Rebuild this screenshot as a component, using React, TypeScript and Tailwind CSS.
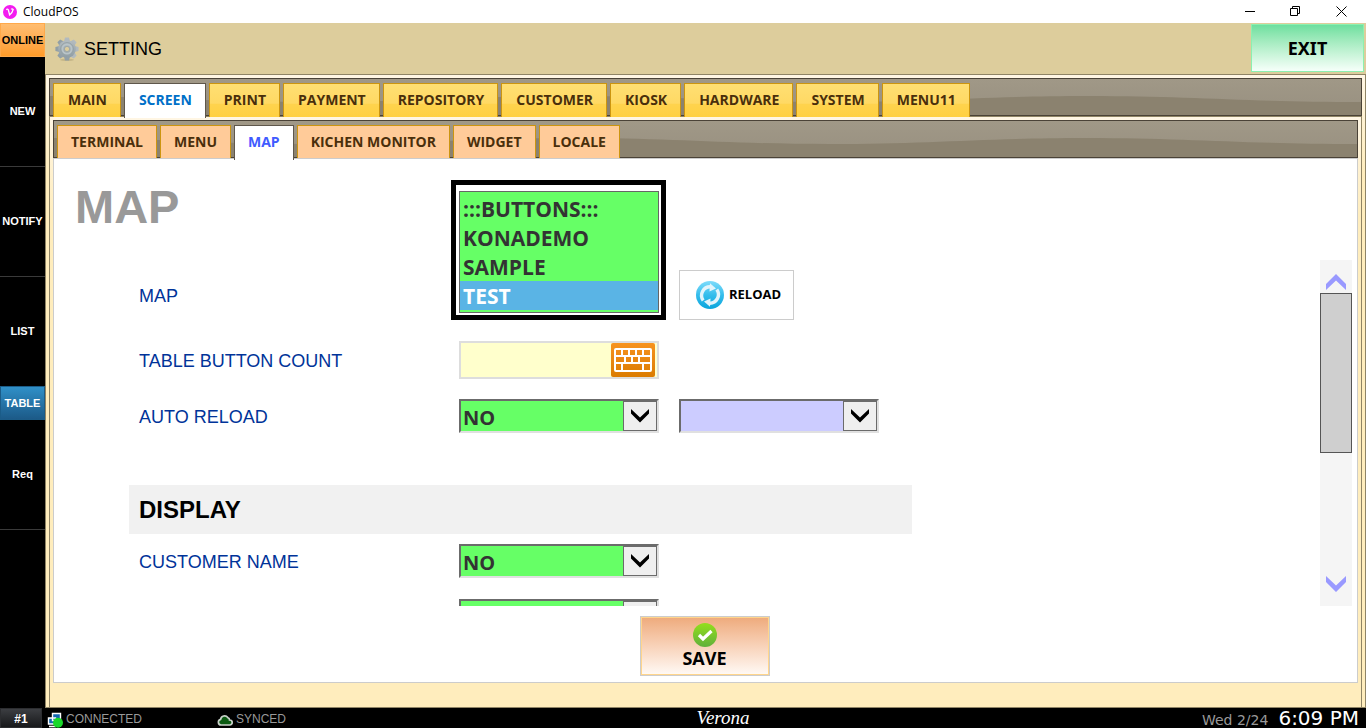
import { useState } from 'react'
import type { ReactNode } from 'react'

const mainTabs = ['MAIN', 'SCREEN', 'PRINT', 'PAYMENT', 'REPOSITORY', 'CUSTOMER', 'KIOSK', 'HARDWARE', 'SYSTEM', 'MENU11']
const screenTabs = ['TERMINAL', 'MENU', 'MAP', 'KICHEN MONITOR', 'WIDGET', 'LOCALE']
const maps = [':::BUTTONS:::', 'KONADEMO', 'SAMPLE', 'TEST']
const sideItems = ['NEW', 'NOTIFY', 'LIST']

const arial = "font-['Liberation_Sans',Arial,sans-serif]"
const segoe = "font-['Open_Sans','Segoe_UI',sans-serif]"
const tahoma = "font-['Noto_Sans',Tahoma,sans-serif]"

function GearIcon() {
  return (
    <svg viewBox="0 0 24 24" className="h-6 w-6" aria-hidden="true">
      <defs>
        <linearGradient id="gear" x1="0" y1="0" x2="0" y2="1">
          <stop offset="0" stopColor="#b4bcc0" />
          <stop offset="1" stopColor="#8f9da4" />
        </linearGradient>
      </defs>
      <ellipse cx="12" cy="22.8" rx="7" ry="1.2" fill="#b5a67c" opacity="0.6" />
      <g fill="url(#gear)">
        {[0, 45, 90, 135].map((a) => (
          <path key={a} d="M10 0.4h4l1 4v15.2l-1 4h-4l-1-4V4.4z" transform={`rotate(${a} 12 12)`} />
        ))}
        <circle cx="12" cy="12" r="8.8" />
      </g>
      <circle cx="12" cy="12" r="6.4" fill="none" stroke="#95a2a7" strokeWidth="1" />
      <circle cx="12" cy="12" r="4.6" fill="none" stroke="#b9c4c8" strokeWidth="1.8" />
      <circle cx="12" cy="12" r="2.6" fill="#ddcd9c" stroke="#95a2a7" strokeWidth="0.8" />
    </svg>
  )
}

function ReloadIcon() {
  return (
    <svg viewBox="0 0 28 30" className="h-[30px] w-7" aria-hidden="true">
      <defs>
        <linearGradient id="reload" x1="0" y1="0" x2="0" y2="1">
          <stop offset="0" stopColor="#7fdcfb" />
          <stop offset="0.5" stopColor="#35bdec" />
          <stop offset="1" stopColor="#0aa5dc" />
        </linearGradient>
      </defs>
      <circle cx="14" cy="15" r="14" fill="url(#reload)" />
      <g fill="none" stroke="#e3f4fb" strokeWidth="3.4">
        <path d="M7.2 20.4A8.6 8.6 0 0 1 14.5 6.8" />
        <path d="M20.8 9.6A8.6 8.6 0 0 1 13.5 23.2" />
      </g>
      <path d="M14 3.2l6 5.4-6.5 3z" fill="#e3f4fb" />
      <path d="M14 26.8l-6-5.4 6.5-3z" fill="#e3f4fb" />
    </svg>
  )
}

function KeyboardIcon() {
  return (
    <svg viewBox="0 0 38 24" className="h-6 w-[38px]" aria-hidden="true">
      <rect x="1" y="1" width="36" height="22" rx="1" fill="none" stroke="#fff" strokeWidth="2" />
      <path
        d="M1 8h36M1 15h36M8 1v7M15 1v7M22 1v7M29 1v7M11 8v7M18 8v7M25 8v7M8 15v8M29 15v8"
        stroke="#fff"
        strokeWidth="2"
      />
    </svg>
  )
}

function Chevron({ className, up = false }: { className: string; up?: boolean }) {
  return (
    <svg viewBox="0 0 20 16" className={className} aria-hidden="true">
      {up ? <path d="M0 10L10 0l10 10v6L10 6.5 0 16z" /> : <path d="M0 0v6l10 10 10-10V0L10 9.5z" />}
    </svg>
  )
}

function TabStrip({ children }: { children: ReactNode }) {
  return (
    <div className="relative h-[38px] border border-[#4a4237] bg-linear-to-b from-[#a09887] to-[#989080]">
      <svg viewBox="0 0 1304 36" preserveAspectRatio="none" className="absolute inset-0 h-full w-full" aria-hidden="true">
        <path
          d="M0 17C100 17 160 23 262 23S420 17 519 17 676 23 776 23 933 17 1033 17 1190 23 1304 23V36H0z"
          fill="#8b826f"
        />
      </svg>
      <div role="tablist" className="relative flex h-[38px] gap-[3px] pt-1 pl-[3px]">
        {children}
      </div>
    </div>
  )
}

function Tab({ label, active, tone, onClick }: { label: string; active: boolean; tone: 'gold' | 'peach'; onClick: () => void }) {
  const idle =
    tone === 'gold'
      ? 'pl-3.5 bg-[linear-gradient(#ffdf73,#ffd964_58%,#ffd34d_62%,#ffd040)]'
      : 'pl-[13px] bg-[#ffcb99]'
  const on = tone === 'gold' ? 'pl-3.5 text-[#0070c8]' : 'pl-[13px] text-[#3f5bff]'
  return (
    <button
      role="tab"
      aria-selected={active}
      onClick={onClick}
      className={`border border-b-0 pr-[13px] text-[14px] font-bold whitespace-nowrap ${segoe} ${
        active ? `relative z-10 -mb-px border-[#5f574b] bg-white pb-1 ${on}` : `border-[#cc9510] pb-0.5 text-[#4a2f0b] ${idle}`
      }`}
    >
      {label}
    </button>
  )
}

function SelectBox({ id, label, value, blue = false }: { id: string; label?: string; value: string; blue?: boolean }) {
  return (
    <div className="relative h-[34px] w-[200px] border-2 border-t-[#6b6b6b] border-r-[#e0e0e0] border-b-[#e0e0e0] border-l-[#6b6b6b]">
      <select
        id={id}
        aria-label={label}
        className={`block h-full w-full appearance-none pt-0.5 pl-0.5 text-[20px] leading-[30px] font-bold text-[#333] ${segoe} ${blue ? 'bg-[#ccccff]' : 'bg-[#66ff66]'}`}
        defaultValue={value}
      >
        <option>{value}</option>
        {!blue && <option>YES</option>}
      </select>
      <span className="pointer-events-none absolute inset-y-0 right-0 flex w-[34px] items-center justify-center border border-[#6b6b6b] bg-[#efefef]">
        <svg viewBox="0 0 20 14" className="h-3.5 w-5" aria-hidden="true">
          <path d="M1 0v4.5l9 9 9-9V0l-9 8.5z" />
        </svg>
      </span>
    </div>
  )
}

function Label({ htmlFor, children }: { htmlFor: string; children: ReactNode }) {
  return (
    <label htmlFor={htmlFor} className="w-80 shrink-0 pt-0.5 pl-2.5 text-[18px] text-[#003399]">
      {children}
    </label>
  )
}

function Sidebar() {
  const item = 'flex h-[110px] w-full items-center justify-center border-b border-[#3a3a3a] text-white'
  return (
    <nav className="w-[45px] shrink-0 bg-black text-[11px] font-bold">
      <button className="h-[34px] w-full border border-[#ffa94a] bg-linear-to-b from-[#ffbd70] to-[#ff9c28] text-black">
        ONLINE
      </button>
      {sideItems.map((name) => (
        <button key={name} className={item}>
          {name}
        </button>
      ))}
      <button className="-mt-px block h-[34px] w-full border border-[#1b5c88] bg-linear-to-b from-[#3090c8] to-[#1c5a88] text-white">
        TABLE
      </button>
      <button className={item}>Req</button>
    </nav>
  )
}

function TitleBar() {
  return (
    <div className="flex h-[23px] shrink-0 items-center bg-white pl-[3px]">
      <svg viewBox="0 0 14 14" className="h-3.5 w-3.5" aria-hidden="true">
        <circle cx="7" cy="7" r="7" fill="#f31bf0" />
        <path d="M3.2 4.6q1.6-1 2.2 0.4l1.2 5q2.8-2 3.6-5.6-1.2-1-2 0" fill="none" stroke="#fff" strokeWidth="1.3" />
      </svg>
      <span className={`pl-1.5 text-[12px] ${segoe}`}>CloudPOS</span>
      <div className="mr-0.5 ml-auto flex">
        <button aria-label="Minimize" className="flex w-[45px] justify-center">
          <svg viewBox="0 0 11 11" className="h-[11px] w-[11px]" stroke="#000"><path d="M0 5.5h10" /></svg>
        </button>
        <button aria-label="Restore" className="flex w-[45px] justify-center">
          <svg viewBox="0 0 11 11" className="h-[11px] w-[11px]" fill="none" stroke="#000">
            <path d="M0.5 2.5h7v7h-7zM2.5 2.5v-2h7v7h-2" />
          </svg>
        </button>
        <button aria-label="Close" className="flex w-[46px] justify-center">
          <svg viewBox="0 0 11 11" className="h-[11px] w-[11px]" stroke="#000"><path d="M0.5 0.5l10 10M10.5 0.5l-10 10" /></svg>
        </button>
      </div>
    </div>
  )
}

function StatusBar() {
  return (
    <footer className="grid h-5 shrink-0 grid-cols-3 items-center bg-black text-[12px] text-[#999]">
      <div className="flex items-center">
        <span className="flex h-5 w-[42px] items-center justify-center border border-[#2c2d30] bg-linear-to-b from-[#3c3e42] to-[#18191b] pt-0.5 font-bold text-white">
          #1
        </span>
        <svg viewBox="0 0 16 16" className="mt-1 ml-[5px] h-4 w-4" aria-hidden="true">
          <path d="M5.5 1.5h8v7h-8zM1.5 6h7v6h-7z" fill="#1268b0" stroke="#fff" strokeWidth="1.4" />
          <path d="M2 14.5h7" stroke="#fff" strokeWidth="1.6" />
          <circle cx="11" cy="10.8" r="5" fill="#19d82a" />
        </svg>
        <span className="w-[154px] pt-0.5 pl-[3px]">CONNECTED</span>
        <svg viewBox="0 0 16 12" className="mt-1 h-3 w-4" aria-hidden="true">
          <path
            d="M4 11a2.9 2.9 0 0 1-0.4-5.7A4 4 0 0 1 10.8 3.6 2.6 2.6 0 0 1 12.6 6a2.5 2.5 0 0 1 0.2 5z"
            fill="#0b5a12"
            stroke="#c8d0c8"
            strokeWidth="1.7"
          />
        </svg>
        <span className="pt-0.5 pl-[3px]">SYNCED</span>
      </div>
      <span className="pl-20 text-center font-['Monotype_Corsiva','Liberation_Serif',serif] text-[19px] leading-5 text-white italic">
        Verona
      </span>
      <div className="flex items-center justify-end gap-2.5 pr-[7px] font-['DejaVu_Sans',Verdana,sans-serif]">
        <span className="pt-1 text-[14px] leading-4">Wed 2/24</span>
        <span className="text-[20px] leading-5 text-white">6:09 PM</span>
      </div>
    </footer>
  )
}

export default function App() {
  const [mainTab, setMainTab] = useState('SCREEN')
  const [subTab, setSubTab] = useState('MAP')
  const [map, setMap] = useState('TEST')

  return (
    <div className={`flex h-screen flex-col bg-white text-black ${arial}`}>
      <TitleBar />
      <div className="flex min-h-0 flex-1">
        <Sidebar />
        <div className="flex min-w-0 flex-1 flex-col bg-[#ddcd9c]">
          <header className="flex h-[51px] shrink-0 items-center pl-2.5">
            <GearIcon />
            <h1 className="pt-0.5 pl-[5px] text-[18px]">SETTING</h1>
            <button
              className={`mr-0.5 mb-px ml-auto h-12 w-[113px] border border-[#8cf0b0] bg-linear-to-b from-[#6ddf9f] to-[#f6fffa] text-[18px] font-bold ${tahoma}`}
            >
              EXIT
            </button>
          </header>

          <div className="flex min-h-0 flex-1 flex-col border border-[#8f8465] bg-[linear-gradient(#fff6e4,#ffedbd_100px)] px-[3px] pt-[3px]">
            <TabStrip>
              {mainTabs.map((t) => (
                <Tab key={t} label={t} tone="gold" active={t === mainTab} onClick={() => setMainTab(t)} />
              ))}
            </TabStrip>

            <div className="flex min-h-0 flex-1 flex-col border-x border-t border-[#8f8465] bg-[linear-gradient(#fff6e4,#ffedbd_100px)] px-[3px] pt-[3px] pb-6">
              <TabStrip>
                {screenTabs.map((t) => (
                  <Tab key={t} label={t} tone="peach" active={t === subTab} onClick={() => setSubTab(t)} />
                ))}
              </TabStrip>

              <main className="relative flex min-h-0 flex-1 flex-col border border-[#ccc] bg-white">
                <h2 className="h-[101px] shrink-0 pt-5 pl-[21px] text-[47px] leading-[56px] font-bold text-[#999]">MAP</h2>

                <div className="flex min-h-0 flex-1 pr-[5px]">
                  <div className="flex flex-1 flex-col overflow-hidden pl-[75px]">
                    <div className="flex items-center pt-2.5">
                      <Label htmlFor="map">MAP</Label>
                      <button
                        className={`ml-[230px] flex h-[50px] w-[115px] items-center justify-center gap-[5px] border border-[#ccc] bg-white pl-1 text-[13px] font-bold ${segoe}`}
                      >
                        <ReloadIcon />
                        RELOAD
                      </button>
                    </div>
                    <div className="flex items-center pt-[21px]">
                      <Label htmlFor="count">TABLE BUTTON COUNT</Label>
                      <div className="ml-2.5 flex h-[38px] w-[200px] items-center border-2 border-[#ddd] bg-[#ffffcc] pr-0.5">
                        <input id="count" className="h-full min-w-0 flex-1 px-1 text-[20px]" />
                        <button
                          aria-label="Keyboard"
                          className="flex h-[34px] w-11 items-center justify-center rounded-xs bg-linear-to-b from-[#f7931e] to-[#db7c00]"
                        >
                          <KeyboardIcon />
                        </button>
                      </div>
                    </div>
                    <div className="flex items-center gap-5 pt-5">
                      <div className="flex items-center gap-2.5">
                        <Label htmlFor="auto">AUTO RELOAD</Label>
                        <SelectBox id="auto" value="NO" />
                      </div>
                      <SelectBox id="interval" label="Reload interval" value="" blue />
                    </div>
                    <h3 className="mt-[52px] h-[49px] w-[783px] shrink-0 bg-[#f1f1f1] pl-2.5 text-[24px] leading-[49px] font-bold">
                      DISPLAY
                    </h3>
                    <div className="flex items-center gap-2.5 pt-2.5">
                      <Label htmlFor="customer">CUSTOMER NAME</Label>
                      <SelectBox id="customer" value="NO" />
                    </div>
                    <div className="ml-[330px] shrink-0 pt-[21px]">
                      <SelectBox id="next" label="Next display option" value="" />
                    </div>
                  </div>

                  <div className="flex w-8 shrink-0 flex-col bg-[#f5f5f5]">
                    <button aria-label="Scroll up" className="flex h-[33px] items-center justify-center pt-2.5">
                      <Chevron up className="h-4 w-5 fill-[#9999ff]" />
                    </button>
                    <div className="h-40 border border-[#555] bg-[#cfcfcf]" />
                    <button aria-label="Scroll down" className="mt-auto flex h-11 items-center justify-center">
                      <Chevron className="h-4 w-5 fill-[#9999ff]" />
                    </button>
                  </div>
                </div>

                <div className="flex h-[76px] shrink-0 items-start justify-center pt-2.5 pr-0.5">
                  <button
                    className={`flex h-[60px] w-[130px] flex-col items-center border border-[#ccc] bg-linear-to-b from-[#eeaa7b] to-[#fffaf6] pt-1.5 text-[18px] leading-[22px] font-bold inset-ring-1 inset-ring-[#ffd58c] ${segoe}`}
                  >
                    <svg viewBox="0 0 24 24" className="h-6 w-6 shrink-0" aria-hidden="true">
                      <defs>
                        <linearGradient id="ok" x1="0" y1="0" x2="0" y2="1">
                          <stop offset="0" stopColor="#93df1c" />
                          <stop offset="1" stopColor="#60b03c" />
                        </linearGradient>
                      </defs>
                      <circle cx="12" cy="12" r="12" fill="url(#ok)" />
                      <path d="M6 12l4 4 8.5-8" fill="none" stroke="#fff" strokeWidth="3.2" />
                    </svg>
                    SAVE
                  </button>
                </div>

                {/* open list of maps, drawn over the title row */}
                <div className="absolute top-[21px] left-[397px] h-[140px] w-[215px] border-[5px] border-black bg-white pt-1.5 pr-0.5 pb-0.5 pl-[3px]">
                  <select
                    id="map"
                    size={4}
                    value={map}
                    onChange={(e) => setMap(e.target.value)}
                    className={`block h-full w-full appearance-none overflow-hidden border border-[#666] bg-[#66ff66] pt-0.5 text-[21px] text-[#333] ${segoe}`}
                  >
                    {maps.map((m) => (
                      <option
                        key={m}
                        className="h-[29px] px-[3px] pt-px pb-0 leading-[29px] font-bold checked:bg-[linear-gradient(#5ab4e5,#5ab4e5)] checked:[-webkit-text-fill-color:#fff]"
                      >
                        {m}
                      </option>
                    ))}
                  </select>
                </div>
              </main>
            </div>
          </div>
        </div>
      </div>
      <StatusBar />
    </div>
  )
}
